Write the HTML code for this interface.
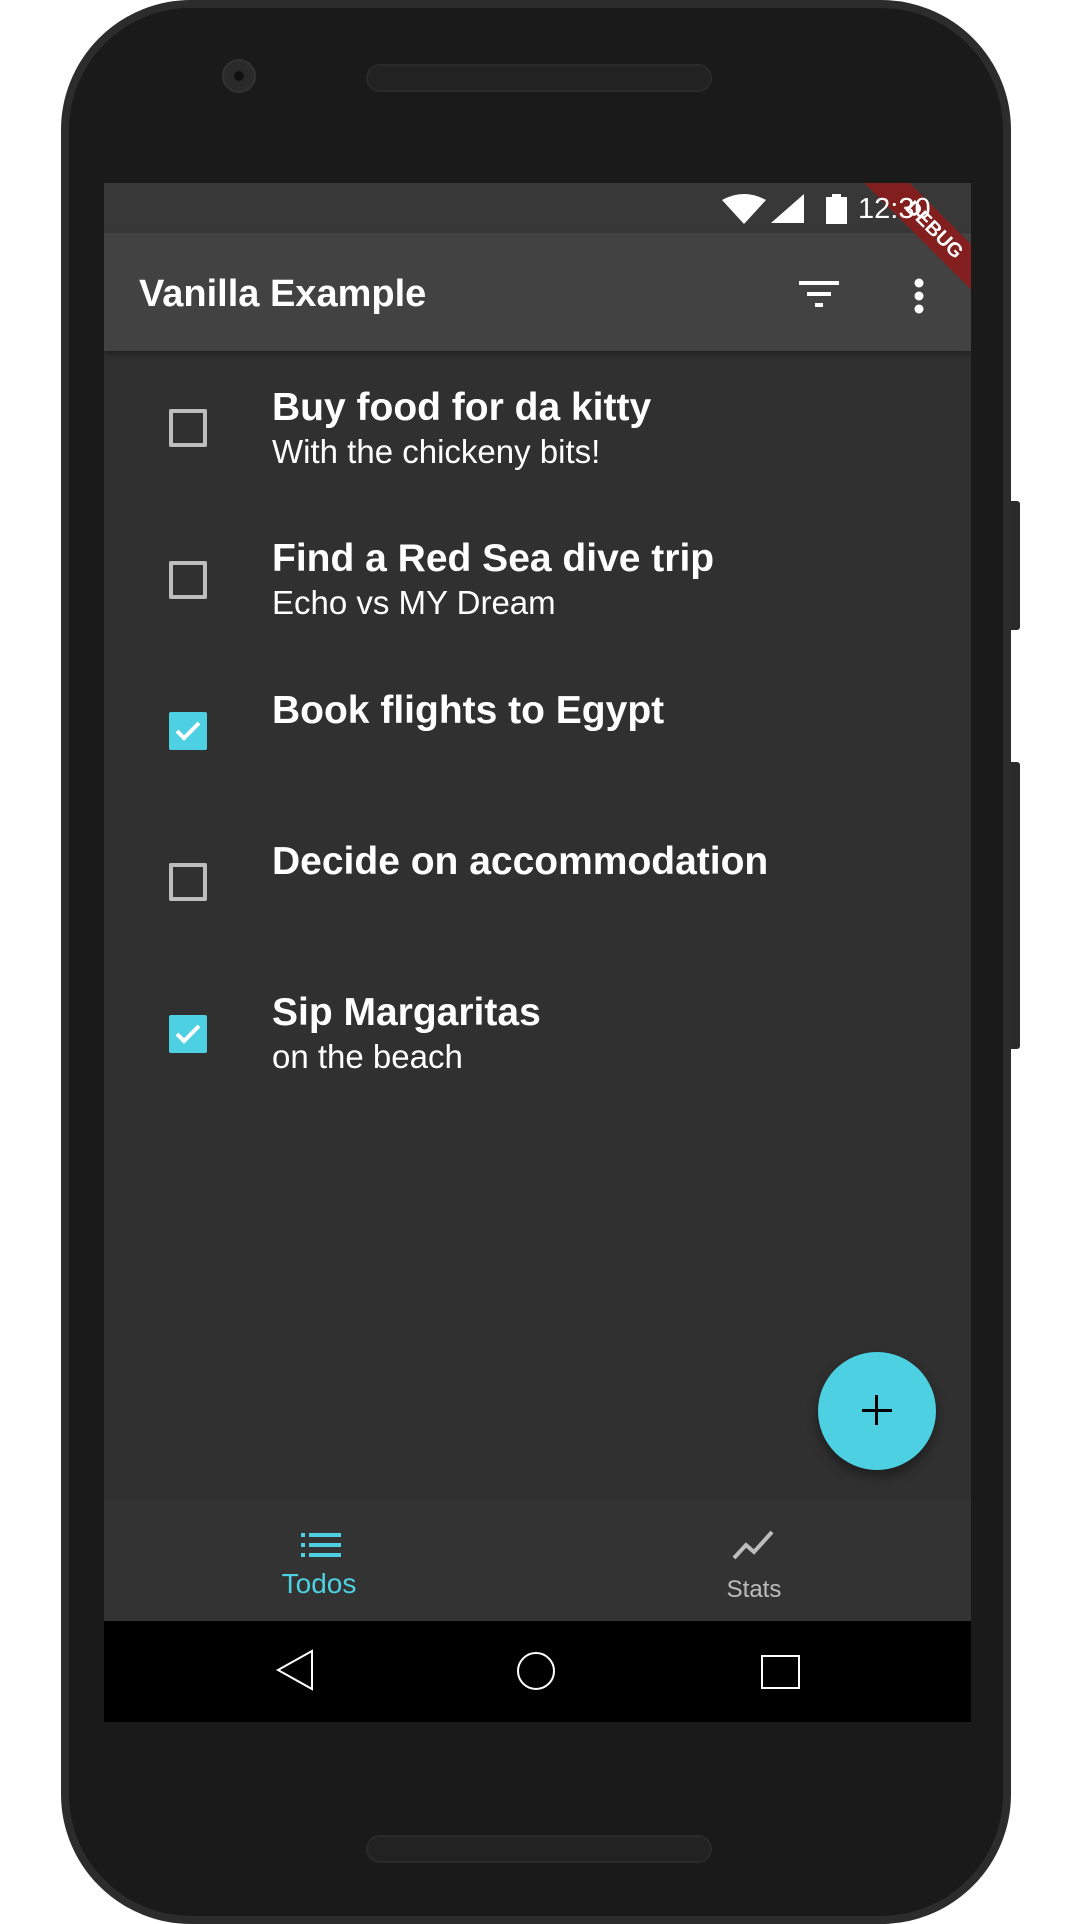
<!DOCTYPE html>
<html><head><meta charset="utf-8"><style>
*{margin:0;padding:0;box-sizing:border-box}
body{width:1080px;height:1920px;background:#fff;position:relative;overflow:hidden;font-family:"Liberation Sans",sans-serif}
.phone{position:absolute;left:61px;top:0;width:950px;height:1924px;background:#1a1a1a;border:8px solid #2c2c2c;border-radius:130px}
.abs{position:absolute}
.screen{position:absolute;left:104px;top:183px;width:867px;height:1539px;background:#303030;overflow:hidden}
.t{position:absolute;color:#fff;white-space:nowrap}
.cb{position:absolute;left:65px;width:38px;height:38px;border:4px solid #bdbdbd;border-radius:2px}
.cb.on{background:#4dd0e1;border-color:#4dd0e1}
.title{font-size:39px;font-weight:bold;left:168px}
.sub{font-size:33px;left:168px}
</style></head><body>
<div class="phone"></div>
<div class="abs" style="left:1011px;top:501px;width:9px;height:129px;background:#2a2a2a;border-radius:0 3px 3px 0"></div>
<div class="abs" style="left:1011px;top:762px;width:9px;height:287px;background:#2a2a2a;border-radius:0 3px 3px 0"></div>
<div class="abs" style="left:222px;top:59px;width:34px;height:34px;border-radius:50%;background:#2a2a2a;border:2px solid #333"></div>
<div class="abs" style="left:234px;top:71px;width:10px;height:10px;border-radius:50%;background:#111"></div>
<div class="abs" style="left:366px;top:64px;width:346px;height:28px;border-radius:14px;background:#222;border:2px solid #2a2a2a"></div>
<div class="abs" style="left:366px;top:1835px;width:346px;height:28px;border-radius:14px;background:#222;border:2px solid #2a2a2a"></div>

<div class="screen">
  <div class="abs" style="left:0;top:0;width:867px;height:50px;background:#383838"></div>
  <div class="abs" style="left:0;top:50px;width:867px;height:118px;background:#424242;box-shadow:0 3px 6px rgba(0,0,0,.35)"></div>
  <div class="abs" style="left:735px;top:31px;width:190px;height:32px;background:rgba(139,28,28,.9);transform:rotate(45deg);transform-origin:center;color:#fff;font-size:20px;font-weight:bold;text-align:center;line-height:32px">DEBUG</div>
  <svg class="abs" style="left:618px;top:11px" width="135" height="30" viewBox="0 0 135 30">
    <path d="M0 6 Q22 -6 44 6 L22 30 Z" fill="#fff"/>
    <path d="M49 29 L82 29 L82 0 Z" fill="#fff"/>
    <rect x="104" y="3" width="21" height="27" fill="#fff"/>
    <rect x="110" y="0" width="9" height="4" fill="#fff"/>
  </svg>
  <div class="t" style="left:754px;top:10px;font-size:29px">12:30</div>
  <div class="t" style="left:35px;top:90px;font-size:38px;font-weight:bold">Vanilla Example</div>
  <svg class="abs" style="left:695px;top:98px" width="40" height="28"><rect x="0" y="0" width="40" height="4" fill="#fff"/><rect x="8" y="11" width="24" height="4" fill="#fff"/><rect x="16" y="22" width="8" height="4" fill="#fff"/></svg>
  <svg class="abs" style="left:809px;top:95px" width="12" height="36"><circle cx="6" cy="5" r="4.5" fill="#fff"/><circle cx="6" cy="18" r="4.5" fill="#fff"/><circle cx="6" cy="31" r="4.5" fill="#fff"/></svg>

  <div class="cb" style="top:226px"></div>
  <div class="t title" style="top:203px">Buy food for da kitty</div>
  <div class="t sub" style="top:250px">With the chickeny bits!</div>
  <div class="cb" style="top:378px"></div>
  <div class="t title" style="top:354px">Find a Red Sea dive trip</div>
  <div class="t sub" style="top:401px">Echo vs MY Dream</div>
  <div class="cb on" style="top:529px"><svg width="30" height="30" viewBox="0 0 30 30"><path d="M4 15 L11 22 L26 7" stroke="#fff" stroke-width="4" fill="none"/></svg></div>
  <div class="t title" style="top:506px">Book flights to Egypt</div>
  <div class="cb" style="top:680px"></div>
  <div class="t title" style="top:657px">Decide on accommodation</div>
  <div class="cb on" style="top:832px"><svg width="30" height="30" viewBox="0 0 30 30"><path d="M4 15 L11 22 L26 7" stroke="#fff" stroke-width="4" fill="none"/></svg></div>
  <div class="t title" style="top:808px">Sip Margaritas</div>
  <div class="t sub" style="top:855px">on the beach</div>

  <div class="abs" style="left:714px;top:1169px;width:118px;height:118px;border-radius:50%;background:#4dd0e1;box-shadow:0 6px 12px rgba(0,0,0,.4)"></div>
  <div class="abs" style="left:771px;top:1212px;width:3px;height:30px;background:#000"></div>
  <div class="abs" style="left:758px;top:1226px;width:30px;height:3px;background:#000"></div>

  <div class="abs" style="left:0;top:1317px;width:867px;height:121px;background:#333"></div>
  <svg class="abs" style="left:197px;top:1350px" width="40" height="24"><g fill="#4dd0e1"><rect x="0" y="0" width="4" height="4"/><rect x="8" y="0" width="32" height="4"/><rect x="0" y="10" width="4" height="4"/><rect x="8" y="10" width="32" height="4"/><rect x="0" y="20" width="4" height="4"/><rect x="8" y="20" width="32" height="4"/></g></svg>
  <div class="t" style="left:170px;top:1385px;width:90px;text-align:center;font-size:28px;color:#4dd0e1">Todos</div>
  <svg class="abs" style="left:628px;top:1347px" width="44" height="30"><path d="M2 28 L14 15 L22 22 L40 2" stroke="#bdbdbd" stroke-width="4" fill="none"/></svg>
  <div class="t" style="left:605px;top:1393px;width:90px;text-align:center;font-size:24px;color:#bdbdbd">Stats</div>

  <div class="abs" style="left:0;top:1438px;width:867px;height:101px;background:#000"></div>
  <svg class="abs" style="left:170px;top:1465px" width="560" height="45">
    <path d="M38 3 L38 41 L4 22 Z" stroke="#fff" stroke-width="2" fill="none"/>
    <ellipse cx="262" cy="23" rx="18" ry="18" stroke="#fff" stroke-width="2" fill="none"/>
    <rect x="488" y="8" width="37" height="32" stroke="#fff" stroke-width="2" fill="none"/>
  </svg>
</div>
</body></html>
